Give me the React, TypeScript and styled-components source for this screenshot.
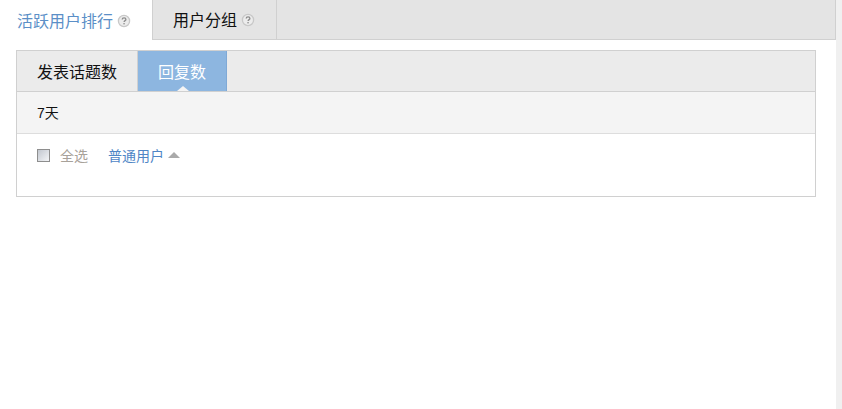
import styled, { createGlobalStyle } from 'styled-components';

const GlobalStyle = createGlobalStyle`
  html, body {
    margin: 0;
    padding: 0;
    background: #fff;
  }
  body {
    font-family: "Liberation Sans", "Noto Sans CJK SC", sans-serif;
    font-size: 14px;
    overflow: hidden;
  }
`;

function HelpIcon() {
  return (
    <HelpSvg viewBox="0 0 14 14" width="14" height="14">
      <circle cx="7" cy="7" r="5.6" fill="#ececec" stroke="#c8c8c8" strokeWidth="1.3" />
      <path
        d="M5.2 5.6c0-1 .8-1.7 1.9-1.7s1.8.6 1.8 1.5c0 1.2-1.8 1.3-1.8 2.7"
        fill="none"
        stroke="#8c8c8c"
        strokeWidth="1.3"
      />
      <rect x="6.4" y="9" width="1.3" height="1.4" fill="#8c8c8c" />
    </HelpSvg>
  );
}

export default function App() {
  return (
    <Page>
      <GlobalStyle />
      <Main>
        <TopTabs>
          <TopTab $active>
            活跃用户排行
            <HelpIcon />
          </TopTab>
          <TopTab>
            用户分组
            <HelpIcon />
          </TopTab>
        </TopTabs>
        <Panel>
          <PanelTabs>
            <PanelTab>发表话题数</PanelTab>
            <PanelTab $active>回复数</PanelTab>
          </PanelTabs>
          <FilterRow>7天</FilterRow>
          <SelectRow>
            <CheckBox />
            <SelectAll>全选</SelectAll>
            <GroupLink>普通用户</GroupLink>
            <Caret />
          </SelectRow>
        </Panel>
      </Main>
      <ScrollStrip />
    </Page>
  );
}

const Page = styled.div`
  display: flex;
  width: 842px;
  height: 409px;
`;

const Main = styled.div`
  width: 836px;
`;

const ScrollStrip = styled.div`
  width: 6px;
  background: #f0f0f0;
`;

const TopTabs = styled.div`
  display: flex;
  height: 39px;
  background: #e4e4e4;
  border-bottom: 1px solid #d0d0d0;
  border-right: 1px solid #d0d0d0;
`;

const TopTab = styled.div<{ $active?: boolean }>`
  display: flex;
  align-items: center;
  height: ${(p) => (p.$active ? '40px' : '39px')};
  padding: ${(p) => (p.$active ? '0 21px 1px 17px' : '0 21px 1px 20px')};
  box-sizing: border-box;
  font-size: 16px;
  color: ${(p) => (p.$active ? '#5b8fc7' : '#111111')};
  background: ${(p) => (p.$active ? '#ffffff' : 'transparent')};
  border-right: 1px solid #d0d0d0;
`;

const HelpSvg = styled.svg`
  margin-left: 4px;
  margin-top: 2px;
`;

const Panel = styled.div`
  width: 798px;
  margin: 10px 0 0 16px;
  border: 1px solid #d0d0d0;
`;

const PanelTabs = styled.div`
  display: flex;
  height: 40px;
  background: #ebebeb;
  border-bottom: 1px solid #d0d0d0;
`;

const PanelTab = styled.div<{ $active?: boolean }>`
  position: relative;
  display: flex;
  align-items: center;
  padding: 0 20px;
  font-size: 16px;
  color: ${(p) => (p.$active ? '#ffffff' : '#111111')};
  background: ${(p) => (p.$active ? '#8db6e0' : 'transparent')};
  border-right: 1px solid ${(p) => (p.$active ? '#7fa9d6' : '#d0d0d0')};

  ${(p) =>
    p.$active &&
    `
    &::after {
      content: "";
      position: absolute;
      left: 50%;
      bottom: 0;
      margin-left: -5px;
      border-left: 6px solid transparent;
      border-right: 6px solid transparent;
      border-bottom: 5px solid #f4f4f4;
    }
  `}
`;

const FilterRow = styled.div`
  display: flex;
  align-items: center;
  height: 42px;
  padding: 0 0 2px 20px;
  box-sizing: border-box;
  color: #111111;
  background: #f4f4f4;
  border-bottom: 1px solid #dddddd;
`;

const SelectRow = styled.div`
  display: flex;
  align-items: center;
  height: 62px;
  padding: 0 0 20px 20px;
  box-sizing: border-box;
`;

const CheckBox = styled.span`
  width: 11px;
  height: 11px;
  border: 1px solid #8e8e8e;
  background: linear-gradient(135deg, #c2c7cf, #f4f5f7);
`;

const SelectAll = styled.span`
  margin-left: 10px;
  color: #a8a29a;
`;

const GroupLink = styled.span`
  margin-left: 20px;
  color: #4f86c6;
`;

const Caret = styled.span`
  width: 0;
  height: 0;
  margin-left: 4px;
  border-left: 6px solid transparent;
  border-right: 6px solid transparent;
  border-bottom: 6px solid #aaaaaa;
`;
